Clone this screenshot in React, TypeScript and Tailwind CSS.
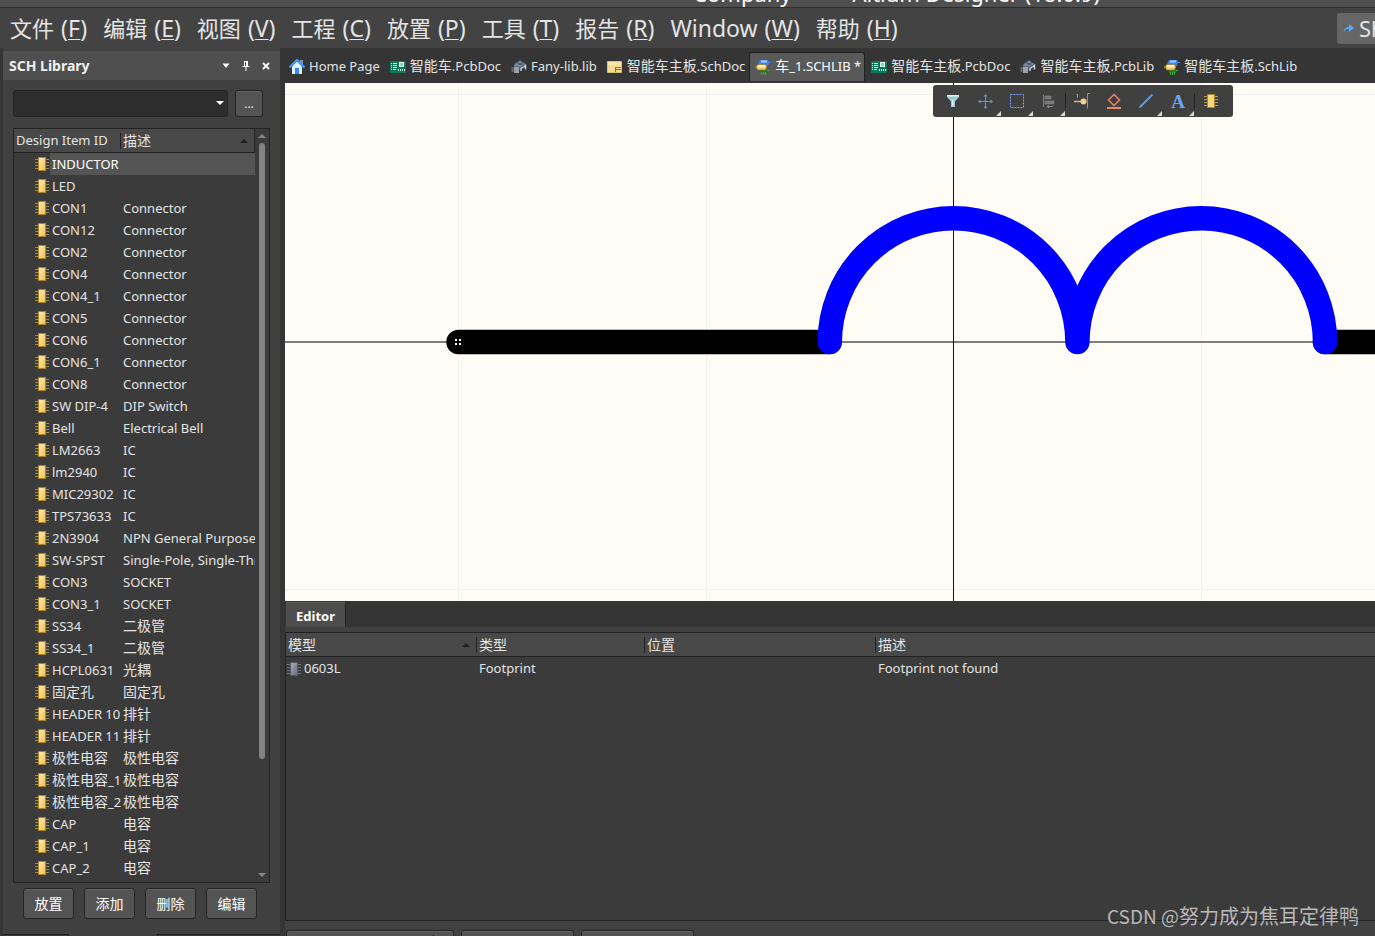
import { Fragment, useState } from "react";
import type { ReactNode } from "react";

const MENUS = [
    ["文件", "F"],
    ["编辑", "E"],
    ["视图", "V"],
    ["工程", "C"],
    ["放置", "P"],
    ["工具", "T"],
    ["报告", "R"],
    ["Window", "W"],
    ["帮助", "H"],
];

const PARTS = [
    ["INDUCTOR", ""],
    ["LED", ""],
    ["CON1", "Connector"],
    ["CON12", "Connector"],
    ["CON2", "Connector"],
    ["CON4", "Connector"],
    ["CON4_1", "Connector"],
    ["CON5", "Connector"],
    ["CON6", "Connector"],
    ["CON6_1", "Connector"],
    ["CON8", "Connector"],
    ["SW DIP-4", "DIP Switch"],
    ["Bell", "Electrical Bell"],
    ["LM2663", "IC"],
    ["lm2940", "IC"],
    ["MIC29302", "IC"],
    ["TPS73633", "IC"],
    ["2N3904", "NPN General Purpose"],
    ["SW-SPST", "Single-Pole, Single-Throw"],
    ["CON3", "SOCKET"],
    ["CON3_1", "SOCKET"],
    ["SS34", "二极管"],
    ["SS34_1", "二极管"],
    ["HCPL0631", "光耦"],
    ["固定孔", "固定孔"],
    ["HEADER 10", "排针"],
    ["HEADER 11", "排针"],
    ["极性电容", "极性电容"],
    ["极性电容_1", "极性电容"],
    ["极性电容_2", "极性电容"],
    ["CAP", "电容"],
    ["CAP_1", "电容"],
    ["CAP_2", "电容"],
];

// Chinese runs are set one size larger than the latin text around them
function Mixed({ text }: { text: string }) {
    return (
        <>
            {text.split(/([\u4e00-\u9fff]+)/).map((run, i) =>
                i % 2 ? <span key={i} className="text-[14px] leading-none">{run}</span> : <Fragment key={i}>{run}</Fragment>
            )}
        </>
    );
}

function Icon({ children }: { children: ReactNode }) {
    return (
        <svg width="16" height="16" viewBox="0 0 16 16" className="shrink-0" aria-hidden="true">
            {children}
        </svg>
    );
}

function ChipIcon({ gray = false }: { gray?: boolean }) {
    const id = gray ? "chipGray" : "chipGold";
    return (
        <svg width="14" height="14" viewBox="0 0 14 14" className="shrink-0" aria-hidden="true">
            <defs>
                <linearGradient id={id} x1="0" y1="0" x2="1" y2="1">
                    <stop offset="0" stopColor={gray ? "#a9adb8" : "#ffeebb"} />
                    <stop offset="1" stopColor={gray ? "#646a78" : "#f2bd4c"} />
                </linearGradient>
            </defs>
            <path d="M0 2.5h14M0 5.5h14M0 8.5h14M0 11.5h14" stroke={gray ? "#70747c" : "#a08a45"} />
            <rect x="3.5" y="0.5" width="7" height="13" fill={`url(#${id})`} stroke={gray ? "#555b66" : "#a8852c"} />
        </svg>
    );
}

function HomeIcon() {
    return (
        <Icon>
            <path d="M11 1h3v5h-3z" fill="#8b929c" />
            <path d="M3 7.5L8 2.5l5 5V15H3z" fill="#e8f0fa" />
            <path d="M0.5 8.5L8 1l7.5 7.5" fill="none" stroke="#3f9bff" strokeWidth="2.2" />
            <path d="M6 9h4v6H6z" fill="#2f8bf5" />
        </Icon>
    );
}

function PcbDocIcon() {
    return (
        <Icon>
            <path d="M0 2h16v12H0z" fill="#087a58" />
            <path d="M1 4h1v1H1zM1 6h1v1H1zM1 8h1v1H1zM1 10h1v1H1zM3 4h4v1H3zM3 6h4v1H3zM3 8h4v1H3zM3 10h3v1H3zM8 10h1v2H8zM10 10h1v2h-1zM12 10h1v2h-1zM14 10h1v2h-1z" fill="#d8f3e6" />
            <path d="M9 3h5v5H9z" fill="#e6fff4" />
            <path d="M10 4h3v3h-3z" fill="#8fd0b8" />
        </Icon>
    );
}

function PcbLibIcon() {
    return (
        <Icon>
            <path d="M3 5l6-4 6 4v3l-6 3-6-3z" fill="#4a5b70" />
            <path d="M4 5l5-3.5L14 5 9 8z" fill="#7088a4" />
            <path d="M6 3.5l6 3M12 3.5l-6 3" stroke="#46586d" />
            <path d="M0.5 8h2v5h-2z" fill="#666c74" />
            <path d="M3 8h5v6H3z" fill="#9b9fa6" />
            <path d="M4 7.5V6h3v1.500" fill="none" stroke="#9b9fa6" />
            <path d="M10 12V9.500L12 8M14.500 10.500V6.500L12.500 8" fill="none" stroke="#d3d6da" strokeWidth="1.400" />
        </Icon>
    );
}

function SchDocIcon() {
    return (
        <Icon>
            <path d="M0.500 2.500h14v11h-14z" fill="#f5dc91" stroke="#dcc078" />
            <path d="M1 3h13v3H1z" fill="#fbe7ac" />
            <path d="M8 8.500h6M9 10.500h5M8.500 8v5" stroke="#8c7434" />
        </Icon>
    );
}

function SchLibIcon() {
    return (
        <Icon>
            <path d="M5 1h8l1 2h2v1h-2l-1 2.500H5L3 4z" fill="#3b83e8" />
            <path d="M6 1.500h6v2H6z" fill="#a8cdff" />
            <path d="M5 10h7l1 2-1 2H5z" fill="#2c7427" />
            <path d="M6.500 13v3M8.500 13v3M10.500 13v3M12 11.500h2" stroke="#43a83b" />
            <path d="M2.500 5.500h8l1.500 2-1.500 3.500h-8L1.500 8.500H0v-1h1.500z" fill="#f0c860" stroke="#94742b" strokeWidth="0.600" />
            <path d="M3 6h7v2.500H3z" fill="#fff0bd" />
        </Icon>
    );
}

const TABS = [
    { name: "Home Page", icon: <HomeIcon /> },
    { name: "智能车.PcbDoc", icon: <PcbDocIcon /> },
    { name: "Fany-lib.lib", icon: <PcbLibIcon /> },
    { name: "智能车主板.SchDoc", icon: <SchDocIcon /> },
    { name: "车_1.SCHLIB *", icon: <SchLibIcon /> },
    { name: "智能车主板.PcbDoc", icon: <PcbDocIcon /> },
    { name: "智能车主板.PcbLib", icon: <PcbLibIcon /> },
    { name: "智能车主板.SchLib", icon: <SchLibIcon /> },
];

const TOOLS = [
    {
        label: "Filter",
        icon: (
            <>
                <path d="M2 2h12v2l-4 4.500V14H6V8.500L2 4z" fill="#9ccbd6" />
                <path d="M2 2h12v1.500H2zM7 7h1.500v6H7z" fill="#d9f1f5" />
            </>
        ),
    },
    {
        label: "Move",
        menu: true,
        icon: (
            <>
                <path d="M8.500 2v13M2 8.500h13" stroke="#6b8fe0" />
                <path d="M8.500 1l2 2.500h-4zM8.500 16l2-2.500h-4zM1 8.500l2.500-2v4zM16 8.500l-2.500-2v4z" fill="#6b8fe0" />
            </>
        ),
    },
    {
        label: "Select",
        menu: true,
        icon: <rect x="1.500" y="1.500" width="13" height="13" fill="none" stroke="#7f9cf0" strokeDasharray="2 1" />,
    },
    {
        label: "Align",
        menu: true,
        icon: (
            <>
                <path d="M2.500 2v12" stroke="#858585" />
                <path d="M4 3h6v3H4zM4 8h9v3H4z" fill="#777777" stroke="#8a8a8a" strokeWidth="0.500" />
                <path d="M6 13.500h6M8 12l-2 1.500L8 15" fill="none" stroke="#8a8a8a" />
            </>
        ),
    },
    {
        label: "Pin",
        divider: true,
        icon: (
            <>
                <path d="M3.500 1v4M2.500 2l1-1" stroke="#9a9a9a" fill="none" />
                <path d="M0 8.500h9" stroke="#d7b676" strokeWidth="1.500" />
                <circle cx="9.500" cy="8.500" r="3" fill="#f4cd91" />
                <path d="M16 0.500h-2.500v15" fill="none" stroke="#5c9be8" />
            </>
        ),
    },
    {
        label: "IEEE symbol",
        icon: (
            <>
                <path d="M8 1.500l5.500 5.500L8 12.500 2.500 7z" fill="none" stroke="#ed8662" strokeWidth="1.500" />
                <path d="M1 15h14" stroke="#ed8662" strokeWidth="2" />
            </>
        ),
    },
    {
        label: "Line",
        menu: true,
        icon: <path d="M1.500 14.500l13-13" stroke="#4f9df5" strokeWidth="2" />,
    },
    {
        label: "Text",
        menu: true,
        icon: <text x="8" y="14.500" textAnchor="middle" fontFamily="Liberation Serif, serif" fontSize="19" fontWeight="bold" fill="#6aa7f2">A</text>,
    },
    {
        label: "Part",
        divider: true,
        icon: (
            <>
                <path d="M1 3.500h14M1 6.500h14M1 9.500h14M1 12.500h14" stroke="#b99d4c" />
                <path d="M4.500 1.500h7v13h-7z" fill="#f9d77c" stroke="#a88431" />
            </>
        ),
    },
];

function ActiveBar() {
    return (
        <div role="toolbar" aria-label="Active bar" className="absolute top-[2px] right-[142px] flex h-8 items-center rounded-[3px] bg-[#404040] pr-[6px] pl-1">
            {TOOLS.map((tool) => (
                <Fragment key={tool.label}>
                    {tool.divider && <span className="h-4 w-px bg-[#222222]" />}
                    <button aria-label={tool.label} className="relative flex size-8 items-center justify-center hover:bg-[#555555]">
                        <Icon>{tool.icon}</Icon>
                        {tool.menu && (
                            <svg width="5" height="5" viewBox="0 0 5 5" className="absolute right-0 bottom-px" aria-hidden="true">
                                <path d="M5 0v5H0z" fill="#d8d8d8" />
                            </svg>
                        )}
                    </button>
                </Fragment>
            ))}
        </div>
    );
}

// Inductor symbol: two half turns between two pins, over the sheet grid
function Sheet() {
    return (
        <svg className="block h-full w-full" role="img" aria-label="INDUCTOR">
            <g stroke="#f3f0ea" strokeDasharray="3 1">
                <path d="M173.500 0v2000M421.500 0v2000M916.500 0v2000M0 11.500h4000M0 506.500h4000" />
            </g>
            <path d="M0 259h4000" stroke="#000000" />
            <path d="M668.500 0v2000" stroke="#111111" />
            <g strokeWidth="24.500" strokeLinecap="round" fill="none">
                <path d="M173.500 259H544.500M1040 259H1411" stroke="#000000" />
                <path d="M544.800 259a123.800 123.800 0 0 1 247.600 0a123.800 123.800 0 0 1 247.600 0" stroke="#0000ff" strokeLinejoin="round" />
            </g>
            <path d="M170 256h2v2h-2zM174 256h2v2h-2zM170 260h2v2h-2zM174 260h2v2h-2z" fill="#ffffff" />
        </svg>
    );
}

function SortArrow() {
    return (
        <svg width="8" height="4" viewBox="0 0 8 4" className="shrink-0" aria-hidden="true">
            <path d="M4 0l4 4H0z" fill="#202020" />
        </svg>
    );
}

const HEAD = "h-6 border-b border-[#222222] p-0 text-left font-normal";
const BUTTON = "rounded-[3px] border border-[#242424] bg-[#545454] shadow-[inset_0_1px_0_#626262] hover:bg-[#606060]";

function LibraryPanel() {
    const [selected, setSelected] = useState(0);

    return (
        <aside className="ml-[3px] flex w-[277px] shrink-0 flex-col bg-[#404040] pt-[3px]">
            <header className="flex h-[29px] shrink-0 items-center justify-between bg-[#4f4f4f] pr-2 pl-[6px]">
                <h2 className="text-[14px] font-bold text-[#f0f0f0]">SCH Library</h2>
                <div className="flex gap-2">
                    <button aria-label="Panel menu" className="flex size-3 items-center justify-center">
                        <svg width="8" height="6" viewBox="0 0 8 6"><path d="M0.500 0.500h7L4 5z" fill="#ffffff" /></svg>
                    </button>
                    <button aria-label="Pin panel" className="flex size-3 items-center justify-center">
                        <svg width="8" height="10" viewBox="0 0 8 10"><path d="M2 0h4v5h1.500v1H0.500V5H2zM3.500 6h1v4h-1z" fill="#ffffff" /><path d="M3 1h1v4H3z" fill="#4f4f4f" /></svg>
                    </button>
                    <button aria-label="Close panel" className="flex size-3 items-center justify-center">
                        <svg width="8" height="8" viewBox="0 0 8 8"><path d="M1 1l6 6M7 1L1 7" stroke="#ffffff" strokeWidth="1.800" /></svg>
                    </button>
                </div>
            </header>

            <div className="flex min-h-0 flex-1 flex-col px-[10px] pt-[10px]">
                <div className="flex h-[27px] shrink-0 gap-[7px] pr-[7px]">
                    <div className="relative flex-1">
                        <select aria-label="Filter" className="h-full w-full appearance-none rounded-[3px] border border-[#242424] bg-[#2d2d2d]">
                            <option></option>
                        </select>
                        <svg width="8" height="4" viewBox="0 0 8 4" className="pointer-events-none absolute top-[11px] right-1" aria-hidden="true">
                            <path d="M0 0h8L4 4z" fill="#ffffff" />
                        </svg>
                    </div>
                    <button className={`w-7 text-[12px] ${BUTTON}`}>...</button>
                </div>

                <div className="mt-[11px] flex min-h-0 flex-1 border border-[#222222] bg-[#3b3b3b]">
                    <div className="min-w-0 flex-1 overflow-hidden">
                        <table className="w-full table-fixed border-separate border-spacing-0">
                            <thead className="bg-[#484848]">
                                <tr>
                                    <th className={`${HEAD} w-[107px]`}>
                                        <div className="flex h-4 items-center border-r border-[#222222] pl-[2px]">Design Item ID</div>
                                    </th>
                                    <th className={`${HEAD} border-r`}>
                                        <div className="flex h-4 items-center justify-between pr-[6px] pl-[2px]">
                                            <Mixed text="描述" />
                                            <SortArrow />
                                        </div>
                                    </th>
                                </tr>
                            </thead>
                            <tbody>
                                {PARTS.map(([name, description], i) => (
                                    <tr key={name} onClick={() => setSelected(i)}>
                                        <td className="p-0">
                                            <div className="flex h-[22px] items-center pl-[21px]">
                                                <ChipIcon />
                                                <span className={`ml-px h-full flex-1 overflow-hidden pl-[2px] leading-[22px] whitespace-nowrap ${i === selected ? "bg-[#545454] text-white" : ""}`}>
                                                    <Mixed text={name} />
                                                </span>
                                            </div>
                                        </td>
                                        <td className={`overflow-hidden p-0 pl-[2px] leading-[22px] whitespace-nowrap ${i === selected ? "bg-[#545454]" : ""}`}>
                                            <div className="h-[22px]"><Mixed text={description} /></div>
                                        </td>
                                    </tr>
                                ))}
                            </tbody>
                        </table>
                    </div>
                    <div className="flex w-[14px] flex-col items-center py-[5px]">
                        <svg width="8" height="4" viewBox="0 0 8 4" aria-hidden="true"><path d="M4 0l4 4H0z" fill="#858585" /></svg>
                        <div className="my-[5px] min-h-0 flex-1">
                            <div className="h-[85%] w-[6px] rounded-[3px] bg-[#828282]" />
                        </div>
                        <svg width="8" height="4" viewBox="0 0 8 4" aria-hidden="true"><path d="M0 0h8L4 4z" fill="#858585" /></svg>
                    </div>
                </div>

                <div className="mt-[5px] mb-[15px] flex shrink-0 gap-[10px] px-[10px]">
                    {["放置", "添加", "删除", "编辑"].map((label) => (
                        <button key={label} className={`h-[31px] w-[51px] text-[14px] text-white ${BUTTON}`}>{label}</button>
                    ))}
                </div>
            </div>
            <div className="flex h-[2px] shrink-0">
                <span className="w-[66px] border-t border-r border-[#222222] bg-[#383838]" />
                <span className="w-[88px]" />
                <span className="flex-1 border-t border-l border-[#222222] bg-[#383838]" />
            </div>
        </aside>
    );
}

function EditorPanel() {
    return (
        <section className="flex h-[335px] shrink-0 flex-col bg-[#414141]">
            <div className="flex h-[26px] shrink-0 bg-[#353535] pt-px pl-px">
                <button className="border-r border-[#222222] bg-[#4d4d4d] px-[10px] pt-1 text-[13px] font-bold text-white shadow-[inset_0_1px_0_#5c5c5c]">Editor</button>
            </div>
            <div className="mt-[5px] min-h-0 flex-1 border border-r-0 border-[#222222] bg-[#3b3b3b]">
                <table className="w-full table-fixed border-separate border-spacing-0">
                    <thead className="bg-[#484848]">
                        <tr>
                            <th className={`${HEAD} w-[191px]`}>
                                <div className="flex h-4 items-center justify-between border-r border-[#222222] pr-[6px] pl-[2px]">
                                    <Mixed text="模型" />
                                    <SortArrow />
                                </div>
                            </th>
                            <th className={`${HEAD} w-[168px]`}>
                                <div className="flex h-4 items-center border-r border-[#222222] pl-[2px]"><Mixed text="类型" /></div>
                            </th>
                            <th className={`${HEAD} w-[231px]`}>
                                <div className="flex h-4 items-center border-r border-[#222222] pl-[2px]"><Mixed text="位置" /></div>
                            </th>
                            <th className={HEAD}>
                                <div className="flex h-4 items-center pl-[2px]"><Mixed text="描述" /></div>
                            </th>
                        </tr>
                    </thead>
                    <tbody>
                        <tr className="h-6">
                            <td className="p-0">
                                <div className="flex h-[22px] items-center gap-[3px] pl-px"><ChipIcon gray />0603L</div>
                            </td>
                            <td className="p-0 pl-[2px]">Footprint</td>
                            <td className="p-0 pl-[2px]"></td>
                            <td className="p-0 pl-[2px]">Footprint not found</td>
                        </tr>
                    </tbody>
                </table>
            </div>
            <div className="mt-[9px] flex h-[6px] shrink-0 gap-[7px] overflow-hidden pl-px">
                <button aria-label="Add footprint" className={`flex h-7 w-[168px] shrink-0 justify-end pt-1 pr-[19px] ${BUTTON}`}>
                    <span className="h-5 w-px bg-[#242424]" />
                </button>
                <button aria-label="Remove footprint" className={`h-7 w-[113px] shrink-0 ${BUTTON}`} />
                <button aria-label="Edit footprint" className={`h-7 w-[113px] shrink-0 ${BUTTON}`} />
            </div>
        </section>
    );
}

export default function App() {
    const [tab, setTab] = useState(4);

    return (
        <div className="relative flex h-screen flex-col overflow-hidden bg-[#353535] font-['Noto_Sans','Noto_Sans_CJK_SC',sans-serif] text-[13px] text-[#e4e4e4]">
            <div className="flex h-2 shrink-0 items-end justify-end overflow-hidden border-b border-[#2d2d2d] bg-[#4f4f4f] pr-[275px]">
                <h1 className="flex gap-12 text-[22px] leading-7 whitespace-nowrap text-white">
                    <span>Company</span>
                    <span>- Altium Designer (18.0.9)</span>
                </h1>
            </div>

            <div className="flex h-10 shrink-0 items-center bg-[#434343] pl-[10px]">
                <nav className="flex flex-1 gap-[16px]">
                    {MENUS.map(([name, key]) => (
                        <button key={key} className="flex gap-[7px] text-[23px] leading-8 whitespace-nowrap">
                            <span className={name === "Window" ? "" : "text-[22px]"}>{name}</span>
                            <span>(<span className="underline decoration-1 underline-offset-2">{key}</span>)</span>
                        </button>
                    ))}
                </nav>
                <button className="flex h-[31px] w-[38px] items-center gap-1 overflow-hidden rounded-l-[3px] bg-[#666666] pl-[6px] text-[22px]">
                    <svg width="12" height="10" viewBox="0 0 12 10" className="shrink-0" aria-hidden="true">
                        <path d="M0.500 9C1 5.500 3 4 6 4V1l5 4-5 4V6C4 6 2 6.500 0.500 9z" fill="#55a8fb" />
                    </svg>
                    Share
                </button>
            </div>

            <div className="flex min-h-0 flex-1">
                <LibraryPanel />
                <div className="ml-[3px] flex min-w-0 flex-1 flex-col">
                    <div role="tablist" className="flex h-[35px] shrink-0 pt-1 pb-[2px]">
                        {TABS.map(({ name, icon }, i) => (
                            <button
                                key={name}
                                role="tab"
                                aria-selected={i === tab}
                                onClick={() => setTab(i)}
                                className={`flex shrink-0 items-center gap-1 rounded-t-[3px] border border-b-0 pr-[3px] pl-[5px] whitespace-nowrap ${i === tab ? "border-[#222222] bg-[#595959] text-white" : "border-transparent"}`}
                            >
                                {icon}
                                <span><Mixed text={name} /></span>
                            </button>
                        ))}
                    </div>
                    <main className="ml-[2px] flex min-h-0 flex-1 flex-col">
                        <div className="relative min-h-0 flex-1 bg-[#fffcf6]">
                            <Sheet />
                            <ActiveBar />
                        </div>
                        <EditorPanel />
                    </main>
                </div>
            </div>

            <p className="pointer-events-none absolute right-4 bottom-2 font-['Noto_Sans_CJK_SC',sans-serif] text-[19px] leading-6 text-[#b8b8b8]">
                CSDN @<span className="text-[20px]">努力成为焦耳定律鸭</span>
            </p>
        </div>
    );
}
